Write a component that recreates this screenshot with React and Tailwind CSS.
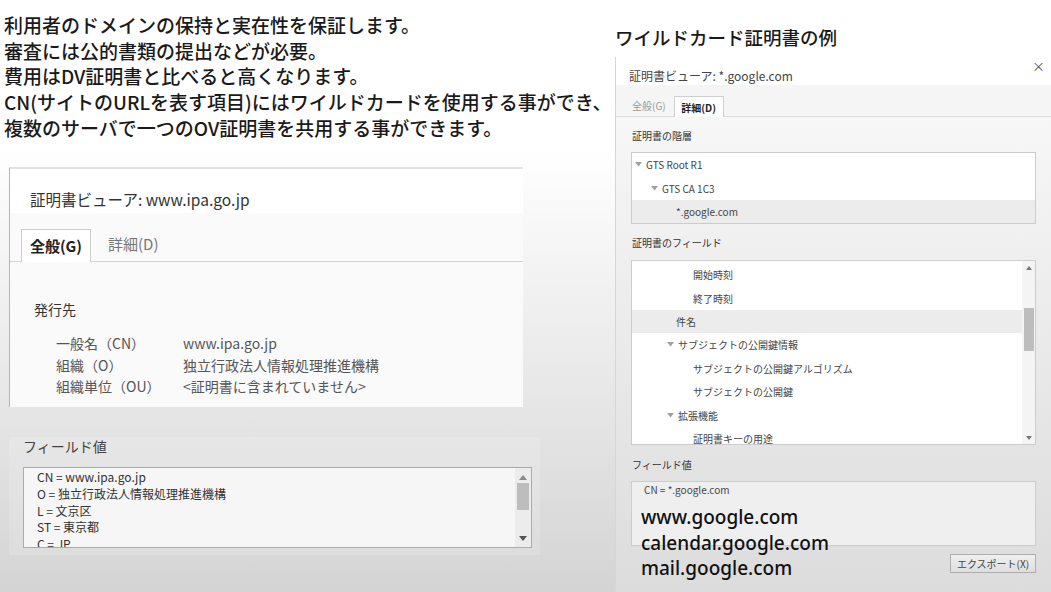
const JP = "font-['Noto_Sans_CJK_JP','Noto_Sans',sans-serif]";

function Tri({ className = "" }) {
  return (
    <svg width="7" height="5" viewBox="0 0 7 5" className={className}>
      <path d="M0 0 L7 0 L3.5 4.5 Z" fill="#a0a0a0" />
    </svg>
  );
}

function UpArrow() {
  return (
    <svg width="8" height="5" viewBox="0 0 8 5">
      <path d="M0 5 L8 5 L4 0 Z" fill="#8a8a8a" />
    </svg>
  );
}
function DownArrow() {
  return (
    <svg width="8" height="5" viewBox="0 0 8 5">
      <path d="M0 0 L8 0 L4 5 Z" fill="#555" />
    </svg>
  );
}

function Row({ indent, tri, selected, children }) {
  return (
    <div
      className={`h-[23.4px] flex items-center ${selected ? "bg-[#ececec]" : ""}`}
      style={{ paddingLeft: indent }}
    >
      {tri && <Tri className="mr-[4px]" />}
      <span>{children}</span>
    </div>
  );
}

export default function App() {
  return (
    <div
      className={`w-[1051px] h-[592px] overflow-hidden flex bg-linear-to-b from-white from-25% to-[#d4d4d4] text-[#222] ${JP}`}
    >
      {/* LEFT COLUMN */}
      <div className="w-[615px] shrink-0 flex flex-col">
        <div className="h-[167px] pt-[12px] pl-[4px] text-[19px] leading-[25.7px] font-medium text-[#1a1a1a] whitespace-nowrap">
          <p>利用者のドメインの保持と実在性を保証します。</p>
          <p>審査には公的書類の提出などが必要。</p>
          <p>費用はDV証明書と比べると高くなります。</p>
          <p>CN(サイトのURLを表す項目)にはワイルドカードを使用する事ができ、</p>
          <p>複数のサーバで一つのOV証明書を共用する事ができます。</p>
        </div>

        {/* screenshot 1 */}
        <div className="ml-[9px] w-[514px] h-[240px] flex flex-col border-t-2 border-t-[#e2e2e2] border-l border-l-[#b4b4b4]">
          <div className="h-[44px] bg-white pt-[20px] pl-[20px] text-[15.5px] leading-[20px] text-[#333]">
            証明書ビューア: www.ipa.go.jp
          </div>
          <div className="h-[49px] bg-[#fafafa] border-b border-[#d2d2d2] flex items-end pl-[11px]">
            <div className="w-[70px] h-[33px] bg-white border border-[#cfcfcf] border-b-0 -mb-px flex items-center justify-center font-bold text-[15px] text-[#222]">
              全般(G)
            </div>
            <div className="h-[33px] ml-[17px] flex items-center text-[15px] text-[#777]">
              詳細(D)
            </div>
          </div>
          <div className="flex-1 bg-[#fafafa] pl-[24px] pt-[37px] text-[14px] text-[#555]">
            <div className="leading-[20px] text-[#333]">発行先</div>
            <div className="mt-[14px] pl-[22px] grid grid-cols-[127px_1fr] leading-[21.5px]">
              <span>一般名（CN）</span>
              <span>www.ipa.go.jp</span>
              <span>組織（O）</span>
              <span>独立行政法人情報処理推進機構</span>
              <span>組織単位（OU）</span>
              <span>&lt;証明書に含まれていません&gt;</span>
            </div>
          </div>
        </div>

        {/* field value 1 */}
        <div className="mt-[30px] ml-[9px] w-[531px] h-[118px] bg-white/15 pl-[14px]">
          <div className="text-[14px] leading-[18px] text-[#444]">フィールド値</div>
          <div className="mt-[12px] w-[509px] h-[81px] border border-[#ababab] bg-[#f6f6f6] flex overflow-hidden">
            <div className="flex-1 pl-[13px] pt-[1px] text-[12px] leading-[16.8px] text-[#333]">
              <div>CN = www.ipa.go.jp</div>
              <div>O = 独立行政法人情報処理推進機構</div>
              <div>L = 文京区</div>
              <div>ST = 東京都</div>
              <div>C = JP</div>
            </div>
            <div className="w-[16px] bg-[#ececec] flex flex-col items-center pt-[7px] pb-[6px]">
              <UpArrow />
              <div className="mt-[3px] w-[12px] h-[27px] bg-[#bdbdbd]" />
              <div className="flex-1" />
              <DownArrow />
            </div>
          </div>
        </div>
      </div>

      {/* RIGHT COLUMN */}
      <div className="flex-1 flex flex-col min-w-0">
        <div className="h-[57px] pt-[25px] text-[18.5px] leading-[24px] font-medium text-[#1a1a1a] whitespace-nowrap">
          ワイルドカード証明書の例
        </div>
        <div className="flex-1 flex flex-col border-l border-[#d6d6d6]">
          <div className="relative h-[28px] bg-white pl-[13px] pt-[11px] text-[12px] leading-[16px] text-[#444]">
            証明書ビューア: *.google.com
            <span className="absolute right-[6px] top-[1px] text-[13px] text-[#555]">×</span>
          </div>
          <div className="h-[32px] bg-[#f5f5f5] border-b border-[#dcdcdc] flex items-end pl-[16px] text-[10px]">
            <div className="h-[21px] flex items-center text-[#9a9a9a] mr-[8px]">全般(G)</div>
            <div className="w-[50px] h-[21px] bg-white border border-[#cfcfcf] border-b-0 -mb-px flex items-center justify-center font-bold text-[#222]">
              詳細(D)
            </div>
          </div>
          <div className="flex-1 flex flex-col pl-[15px] pr-[15px] bg-linear-to-b from-[#f7f7f7] to-[#dcdcdc] text-[10px] text-[#444]">
            <div className="pt-[12px] pl-[1px] leading-[14px] text-[#333]">証明書の階層</div>
            <div className="mt-[9px] h-[72px] border border-[#cccccc] bg-white overflow-hidden">
              <Row indent={3} tri>GTS Root R1</Row>
              <Row indent={19} tri>GTS CA 1C3</Row>
              <Row indent={44} selected>*.google.com</Row>
            </div>
            <div className="mt-[12px] pl-[1px] leading-[14px] text-[#333]">証明書のフィールド</div>
            <div className="mt-[10px] h-[185px] border border-[#cccccc] bg-white flex overflow-hidden">
              <div className="flex-1 pt-[2px]">
                <Row indent={61}>開始時刻</Row>
                <Row indent={61}>終了時刻</Row>
                <Row indent={44} selected>件名</Row>
                <Row indent={35} tri>サブジェクトの公開鍵情報</Row>
                <Row indent={61}>サブジェクトの公開鍵アルゴリズム</Row>
                <Row indent={61}>サブジェクトの公開鍵</Row>
                <Row indent={35} tri>拡張機能</Row>
                <Row indent={61}>証明書キーの用途</Row>
              </div>
              <div className="w-[13px] bg-[#f4f4f4] flex flex-col items-center pt-[5px] pb-[4px]">
                <svg width="6" height="4" viewBox="0 0 6 4"><path d="M0 4 L6 4 L3 0 Z" fill="#777" /></svg>
                <div className="mt-[38px] w-[10px] h-[43px] bg-[#bdbdbd]" />
                <div className="flex-1" />
                <svg width="6" height="4" viewBox="0 0 6 4"><path d="M0 0 L6 0 L3 4 Z" fill="#777" /></svg>
              </div>
            </div>
            <div className="mt-[13px] pl-[1px] leading-[14px] text-[#333]">フィールド値</div>
            <div className="relative mt-[9px] h-[65px] border border-[#cccccc] bg-[#efefef]">
              <div className="pl-[12px] pt-[1px] leading-[14px] text-[#444]">CN = *.google.com</div>
              <div className="absolute left-[9px] top-[23px] text-[19px] leading-[25.5px] font-medium text-[#111] whitespace-nowrap font-['Noto_Sans',sans-serif]">
                <div>www.google.com</div>
                <div>calendar.google.com</div>
                <div>mail.google.com</div>
              </div>
            </div>
            <div className="mt-[8px] self-end w-[86px] h-[19px] border border-[#adadad] bg-linear-to-b from-[#f0f0f0] to-[#dedede] flex items-center justify-center text-[10px] text-[#444]">
              エクスポート(X)
            </div>
          </div>
        </div>
      </div>
    </div>
  );
}
